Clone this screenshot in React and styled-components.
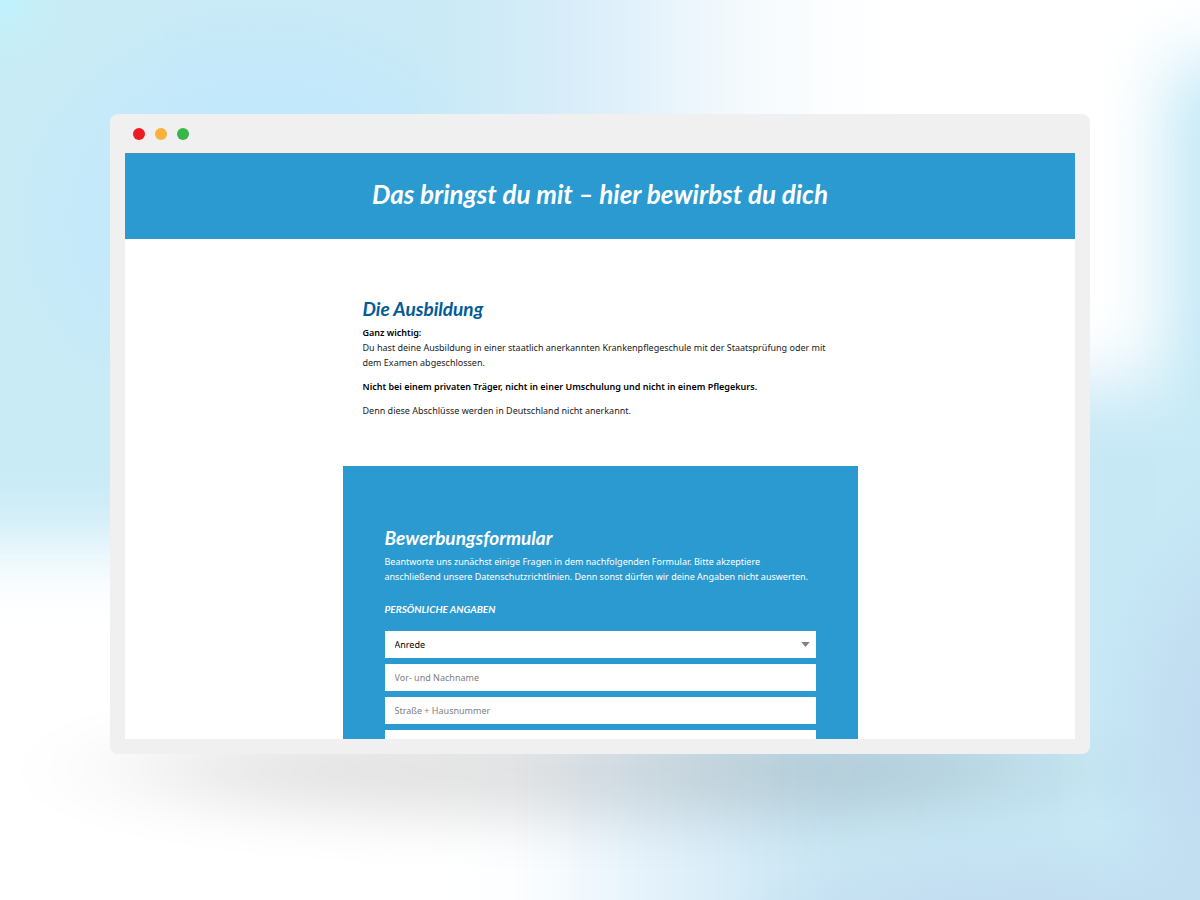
import React from "react";

import styled, { createGlobalStyle } from "styled-components";

const App = () => {
  return (
    <>
      <GlobalStyle />
      <Page>
        <Backdrop />
        <BrowserWindow>
          <TitleBar>
            <Dot $color="#ed1c24" />
            <Dot $color="#fbb03b" />
            <Dot $color="#39b54a" />
          </TitleBar>
          <Viewport>
            <Banner>
              <BannerTitle>Das bringst du mit – hier bewirbst du dich</BannerTitle>
            </Banner>

            <Intro>
              <SectionTitle $color="#005b97">Die Ausbildung</SectionTitle>
              <Text>
                <strong>Ganz wichtig:</strong>
                <br />
                Du hast deine Ausbildung in einer staatlich anerkannten
                Krankenpflegeschule mit der Staatsprüfung oder mit dem Examen
                abgeschlossen.
              </Text>
              <Text>
                <strong>
                  Nicht bei einem privaten Träger, nicht in einer Umschulung und
                  nicht in einem Pflegekurs.
                </strong>
              </Text>
              <Text>
                Denn diese Abschlüsse werden in Deutschland nicht anerkannt.
              </Text>
            </Intro>

            <FormCard>
              <SectionTitle $color="#fff">Bewerbungsformular</SectionTitle>
              <Text $light>
                Beantworte uns zunächst einige Fragen in dem nachfolgenden
                Formular. Bitte akzeptiere anschließend unsere
                Datenschutzrichtlinien. Denn sonst dürfen wir deine Angaben
                nicht auswerten.
              </Text>
              <GroupTitle>Persönliche Angaben</GroupTitle>
              <Fields>
                <SelectWrapper>
                  <Select aria-label="Anrede" defaultValue="">
                    <option value="">Anrede</option>
                  </Select>
                  <Arrow viewBox="0 0 10 6" aria-hidden="true">
                    <path d="M0 0h10L5 6z" />
                  </Arrow>
                </SelectWrapper>
                <Input
                  aria-label="Vor- und Nachname"
                  placeholder="Vor- und Nachname"
                />
                <Input
                  aria-label="Straße + Hausnummer"
                  placeholder="Straße + Hausnummer"
                />
                <Input aria-label="PLZ + Ort" />
              </Fields>
            </FormCard>
          </Viewport>
        </BrowserWindow>
      </Page>
    </>
  );
};

const Backdrop = () => (
  <BackdropSvg viewBox="0 0 1200 900" preserveAspectRatio="none" aria-hidden="true">
    <defs>
      <filter id="soft" x="-50%" y="-50%" width="200%" height="200%" colorInterpolationFilters="sRGB">
        <feGaussianBlur stdDeviation="36" />
      </filter>
      <filter id="shade" x="-50%" y="-100%" width="200%" height="300%" colorInterpolationFilters="sRGB">
        <feGaussianBlur stdDeviation="80 28" />
      </filter>
      <linearGradient id="sky" gradientUnits="userSpaceOnUse" x1="0" x2="860" y1="0" y2="0">
        <stop offset="0" stopColor="#c9ebf6" />
        <stop offset="0.52" stopColor="#c9eaf6" />
        <stop offset="0.7" stopColor="#dceefa" />
        <stop offset="0.84" stopColor="#f2f9fd" />
        <stop offset="1" stopColor="#ffffff" />
      </linearGradient>
      <radialGradient id="glow">
        <stop offset="0.4" stopColor="#c1e8fe" />
        <stop offset="1" stopColor="#c1e8fe" stopOpacity="0" />
      </radialGradient>
      <radialGradient id="corner">
        <stop offset="0" stopColor="#bdf2ff" />
        <stop offset="0.3" stopColor="#c4f0f8" stopOpacity="0.8" />
        <stop offset="1" stopColor="#c9ebf6" stopOpacity="0" />
      </radialGradient>
      <linearGradient id="floor" gradientUnits="userSpaceOnUse" x1="480" x2="1200" y1="0" y2="0">
        <stop offset="0" stopColor="#ffffff" />
        <stop offset="0.08" stopColor="#fafdff" />
        <stop offset="0.2" stopColor="#e8f4fc" />
        <stop offset="0.48" stopColor="#c8e5f3" />
        <stop offset="1" stopColor="#c6e9f5" />
      </linearGradient>
      <radialGradient id="haze">
        <stop offset="0.3" stopColor="#c1dbf0" />
        <stop offset="1" stopColor="#c1dbf0" stopOpacity="0" />
      </radialGradient>
    </defs>
    <rect width="1200" height="900" fill="#fff" />
    <rect x="-150" y="-150" width="1020" height="695" fill="url(#sky)" filter="url(#soft)" />
    <ellipse cx="260" cy="220" rx="260" ry="220" fill="url(#glow)" />
    <circle cx="0" cy="0" r="100" fill="url(#corner)" />
    <rect x="1170" y="64" width="200" height="400" fill="#bfe7f6" filter="url(#soft)" />
    <rect x="480" y="385" width="900" height="660" fill="url(#floor)" filter="url(#soft)" />
    <ellipse cx="1240" cy="740" rx="150" ry="270" fill="url(#haze)" />
    <ellipse cx="1030" cy="970" rx="340" ry="150" fill="url(#haze)" />
    <ellipse cx="590" cy="770" rx="460" ry="50" fill="#000" opacity="0.11" filter="url(#shade)" />
  </BackdropSvg>
);

export default App;

const headingFont = `Lato, "Noto Sans", sans-serif`;

const GlobalStyle = createGlobalStyle`
  * {
    box-sizing: border-box;
  }

  body {
    margin: 0;
    font-family: "Noto Sans", "Open Sans", sans-serif;
  }
`;

const Page = styled.main`
  position: relative;
  height: 100vh;
  padding: 114px 110px 146px;
  overflow: hidden;

  display: flex;
`;

const BackdropSvg = styled.svg`
  position: absolute;
  inset: 0;
  width: 100%;
  height: 100%;
`;

const BrowserWindow = styled.div`
  position: relative;
  flex: 1;
  min-width: 0;
  padding: 0 15px 15px;
  border-radius: 8px;
  background-color: #f0f0f0;

  display: flex;
  flex-direction: column;
`;

const TitleBar = styled.div`
  height: 39px;
  padding: 0 8px;
  flex-shrink: 0;

  display: flex;
  align-items: center;
  gap: 10px;
`;

const Dot = styled.span`
  width: 12px;
  height: 12px;
  border-radius: 50%;
  background-color: ${({ $color }) => $color};
`;

const Viewport = styled.div`
  flex: 1;
  min-height: 0;
  overflow: hidden;
  background-color: #fff;
`;

const Banner = styled.header`
  padding: 25px 0 30px;
  border-top: 1px solid #4b8fb5;
  background-color: #2a9ad1;
`;

const BannerTitle = styled.h1`
  margin: 0;
  color: #fff;
  font-family: ${headingFont};
  font-size: 26px;
  font-style: italic;
  font-weight: 700;
  line-height: 30px;
  text-align: center;
`;

const Intro = styled.section`
  width: 50%;
  margin: 0 auto;
  padding: 58px 0 39px;
`;

const SectionTitle = styled.h2`
  margin: 0 0 4px;
  color: ${({ $color }) => $color};
  font-family: ${headingFont};
  font-size: 19px;
  font-style: italic;
  font-weight: 700;
  line-height: 24px;
`;

const Text = styled.p`
  margin: 0 0 9px;
  color: ${({ $light }) => ($light ? "#fff" : "#222")};
  font-size: 9px;
  line-height: 15px;

  strong {
    color: #000;
    font-weight: 600;
  }
`;

const FormCard = styled.form`
  width: calc(50% + 40px);
  margin: 0 auto;
  padding: 60px 42px;
  background-color: #2a9ad1;
`;

const GroupTitle = styled.h3`
  margin: 18px 0 14px;
  color: #fff;
  font-family: ${headingFont};
  font-size: 10px;
  font-style: italic;
  font-weight: 700;
  line-height: 15px;
  text-transform: uppercase;
`;

const Fields = styled.div`
  display: grid;
  gap: 6px;
`;

const SelectWrapper = styled.div`
  position: relative;
`;

const Select = styled.select`
  display: block;
  appearance: none;
  width: 100%;
  height: 27px;
  padding: 0 10px;
  border: 0;
  border-radius: 0;
  background-color: #fff;
  color: #000;
  font-family: inherit;
  font-size: 9px;
`;

const Arrow = styled.svg`
  position: absolute;
  top: 11px;
  right: 6px;
  width: 9px;
  height: 5px;
  fill: #808080;
  pointer-events: none;
`;

const Input = styled.input`
  width: 100%;
  height: 27px;
  padding: 0 10px;
  border: 0;
  background-color: #fff;
  font-family: inherit;
  font-size: 9px;

  &::placeholder {
    color: #808080;
  }
`;
